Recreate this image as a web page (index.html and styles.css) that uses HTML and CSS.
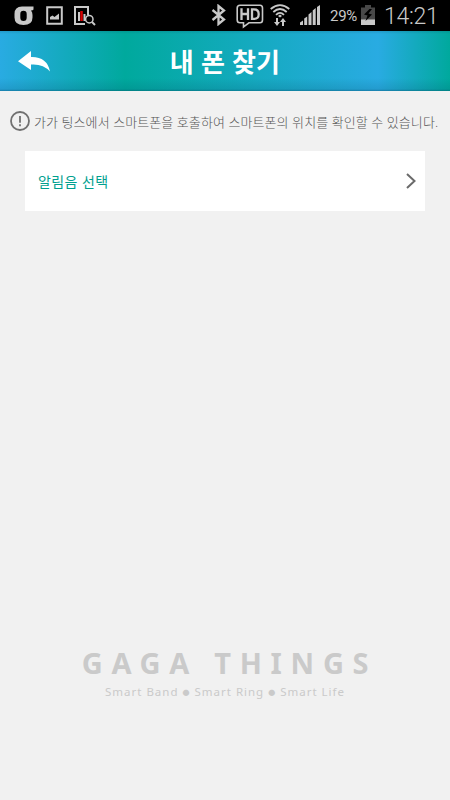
FILE: index.html
```html
<!DOCTYPE html>
<html lang="ko">
<head>
<meta charset="utf-8">
<title>내 폰 찾기</title>
<link rel="stylesheet" href="styles.css">
</head>
<body>
<div class="status">
  <svg class="ic-carrier" width="20" height="20" viewBox="0 0 20 20"><path d="M19.500 0.500V3.500Q19 4.500 17 4.500Q18.500 6 18.500 9V11.500Q18.500 19 9.500 19Q0.500 19 0.500 11.500V8Q0.500 0.500 8 0.500ZM9.500 4.700Q6.300 4.700 6.300 8V11.500Q6.300 15 9.500 15Q12.700 15 12.700 11.500V8Q12.700 4.700 9.500 4.700Z" fill="#c9c9c9" fill-rule="evenodd"/></svg>
  <svg class="ic-image" width="17" height="20" viewBox="0 0 17 20"><path d="M1.200 1.200H15.800V17.800H1.200Z" fill="none" stroke="#c9c9c9" stroke-width="2"/><path d="M4 13.500V11L6.500 9.500L8.500 11L13 7.500V13.500Z" fill="#c9c9c9"/></svg>
  <svg class="ic-chart" width="22" height="20" viewBox="0 0 22 20"><path d="M14 9V1H1V18H11" fill="none" stroke="#c9c9c9" stroke-width="2"/><path d="M4 6H6V15H4ZM9.500 8H11.500V15H9.500Z" fill="#c9c9c9"/><path d="M6.300 5H8.800V15H6.300Z" fill="#d80000"/><circle cx="15.300" cy="13.200" r="3.700" fill="#000" stroke="#c9c9c9" stroke-width="1.500"/><path d="M18 16L21 19" stroke="#c9c9c9" stroke-width="2"/></svg>
  <svg class="ic-bt" width="15" height="22" viewBox="0 0 15 22"><path d="M1.500 6L13 15.500L7.500 20V2L13 6.500L1.500 16" fill="none" stroke="#c9c9c9" stroke-width="2.300"/></svg>
  <svg class="ic-hd" width="28" height="25" viewBox="0 0 28 25"><path d="M4 1.200H24Q26.500 1.200 26.500 4V16Q26.500 18.800 24 18.800H13L7.500 23V18.800H4Q1.200 18.800 1.200 16V4Q1.200 1.200 4 1.200Z" fill="none" stroke="#c9c9c9" stroke-width="1.600"/><path d="M5.500 4.300V16M12 4.300V16M5.500 10H12M16 5.400V14.900H18Q22.700 15 22.700 10.200Q22.700 5.400 18 5.400Z" fill="none" stroke="#c9c9c9" stroke-width="2.300"/></svg>
  <svg class="ic-wifi" width="20" height="23" viewBox="0 0 20 23"><g fill="none" stroke="#c9c9c9" stroke-width="1.800"><path d="M0.700 5Q10 -2.800 19.300 5M3.300 8Q10 2 16.700 8M6 10.800Q10 6.800 14 10.800"/></g><path d="M10 10.500L12 12L10 13.500L8 12ZM6 18V14H8V18H10L7 22L4 18ZM12 22V18H10L13 14L16 18H14V22Z" fill="#c9c9c9"/></svg>
  <svg class="ic-signal" width="20" height="20" viewBox="0 0 20 20"><path d="M0 17.500L3 15.500V20H0ZM4.200 13.500L7.200 11.500V20H4.200ZM8.500 9.500L11.500 7V20H8.500ZM12.700 5.500L15.700 3V20H12.700ZM17 2L20 0V20H17Z" fill="#c9c9c9"/></svg>
  <span class="percent">29%</span>
  <svg class="ic-battery" width="14" height="20" viewBox="0 0 14 20"><path d="M0 2.500H4V0H10V2.500H14V20H0Z" fill="#484848"/><path d="M0 14.500H14V20H0Z" fill="#c9c9c9"/><path d="M8.500 4L3 9.500L6.500 10.500L4.500 16L11 9.500L7.500 8.500L11 4Z" fill="#000"/></svg>
  <span class="clock">14:21</span>
</div>
<header class="header">
  <svg class="back" width="33" height="22" viewBox="0 0 33 22"><path d="M0 10.300L13 0V6Q29 5.500 32 20.500Q25 12.500 13 13.500V19Z" fill="#fff"/></svg>
  <h1 class="title">내 폰 찾기</h1>
</header>
<main class="content">
  <div class="notice">
    <svg width="20" height="20" viewBox="0 0 20 20"><circle cx="10" cy="10" r="9" fill="none" stroke="#707070" stroke-width="1.800"/><path d="M10 5V11.800M10 13.300V15.200" stroke="#707070" stroke-width="1.800"/></svg>
    <p class="notice-text">가가 팅스에서 스마트폰을 호출하여 스마트폰의 위치를 확인할 수 있습니다.</p>
  </div>
  <div class="row">
    <span class="row-label">알림음 선택</span>
    <svg width="10" height="16" viewBox="0 0 10 16"><path d="M1 1L8.500 8L1 15" fill="none" stroke="#6a6a6a" stroke-width="2"/></svg>
  </div>
</main>
<footer class="brand">
  <div class="brand-name">GAGA THINGS</div>
  <div class="brand-tag">Smart Band <span class="dot">●</span> Smart Ring <span class="dot">●</span> Smart Life</div>
</footer>
</body>
</html>
```
FILE: styles.css
```css
* { box-sizing: border-box; }
body {
  margin: 0;
  height: 800px;
  display: flex;
  flex-direction: column;
  background: #f1f1f1;
  font-family: "Noto Sans", "Noto Sans CJK KR", sans-serif;
  overflow: hidden;
}
svg { display: block; flex: none; }
.status {
  height: 31px;
  flex: none;
  display: flex;
  align-items: flex-start;
  background: #000;
  color: #c9c9c9;
  font-family: Roboto, sans-serif;
  white-space: nowrap;
}
.ic-carrier { margin: 6px 0 0 14px; }
.ic-image { margin: 6px 0 0 12px; }
.ic-chart { margin: 6px 0 0 11px; }
.ic-bt { margin: 4px 0 0 115px; }
.ic-hd { margin: 4px 0 0 10px; }
.ic-wifi { margin: 4px 0 0 6px; }
.ic-signal { margin: 5px 0 0 10px; }
.percent { width: 31px; margin-left: 10px; font-size: 15px; line-height: 32px; letter-spacing: -0.3px; }
.ic-battery { margin-top: 5px; }
.clock { margin-left: 9px; font-size: 23px; line-height: 33px; font-weight: 300; letter-spacing: -0.3px; }
.header {
  height: 60px;
  flex: none;
  display: grid;
  grid-template-columns: 60px 1fr 60px;
  align-items: center;
  background:
    linear-gradient(to bottom, rgba(0, 50, 70, 0.15), transparent 3px, transparent 47px, rgba(0, 60, 90, 0.14) 58px, rgba(0, 60, 90, 0.4)),
    linear-gradient(to right, #29abe2, #00a99d 125px, #29abe2 378px, #00a99d 450px);
}
.back { margin: 1px 0 0 18px; }
.title { margin: 2px 0 0; text-align: center; color: #fff; font-size: 26px; line-height: 36px; font-weight: 700; letter-spacing: 0.2px; }
.content { flex: 1; }
.notice {
  height: 60px;
  padding: 0 0 0 10px;
  display: flex;
  align-items: center;
  gap: 4px;
}
.notice-text { margin: 0; color: #555; font-size: 13px; font-weight: 300; letter-spacing: 0.08px; white-space: nowrap; }
.row {
  height: 60px;
  margin: 0 25px;
  padding: 0 9px 0 13px;
  display: flex;
  align-items: center;
  justify-content: space-between;
  background: #fff;
}
.row-label { color: #00a08f; font-size: 14px; letter-spacing: 0.4px; }
.brand { height: 160px; text-align: center; color: #cacaca; white-space: nowrap; }
.brand-name { margin-top: 3px; font-size: 29px; line-height: 40px; font-weight: 700; letter-spacing: 8.7px; padding-left: 9px; }
.brand-tag { margin-top: 1px; font-size: 11.5px; line-height: 16px; letter-spacing: 1px; }
.dot { font-size: 7px; vertical-align: 1px; }
```
